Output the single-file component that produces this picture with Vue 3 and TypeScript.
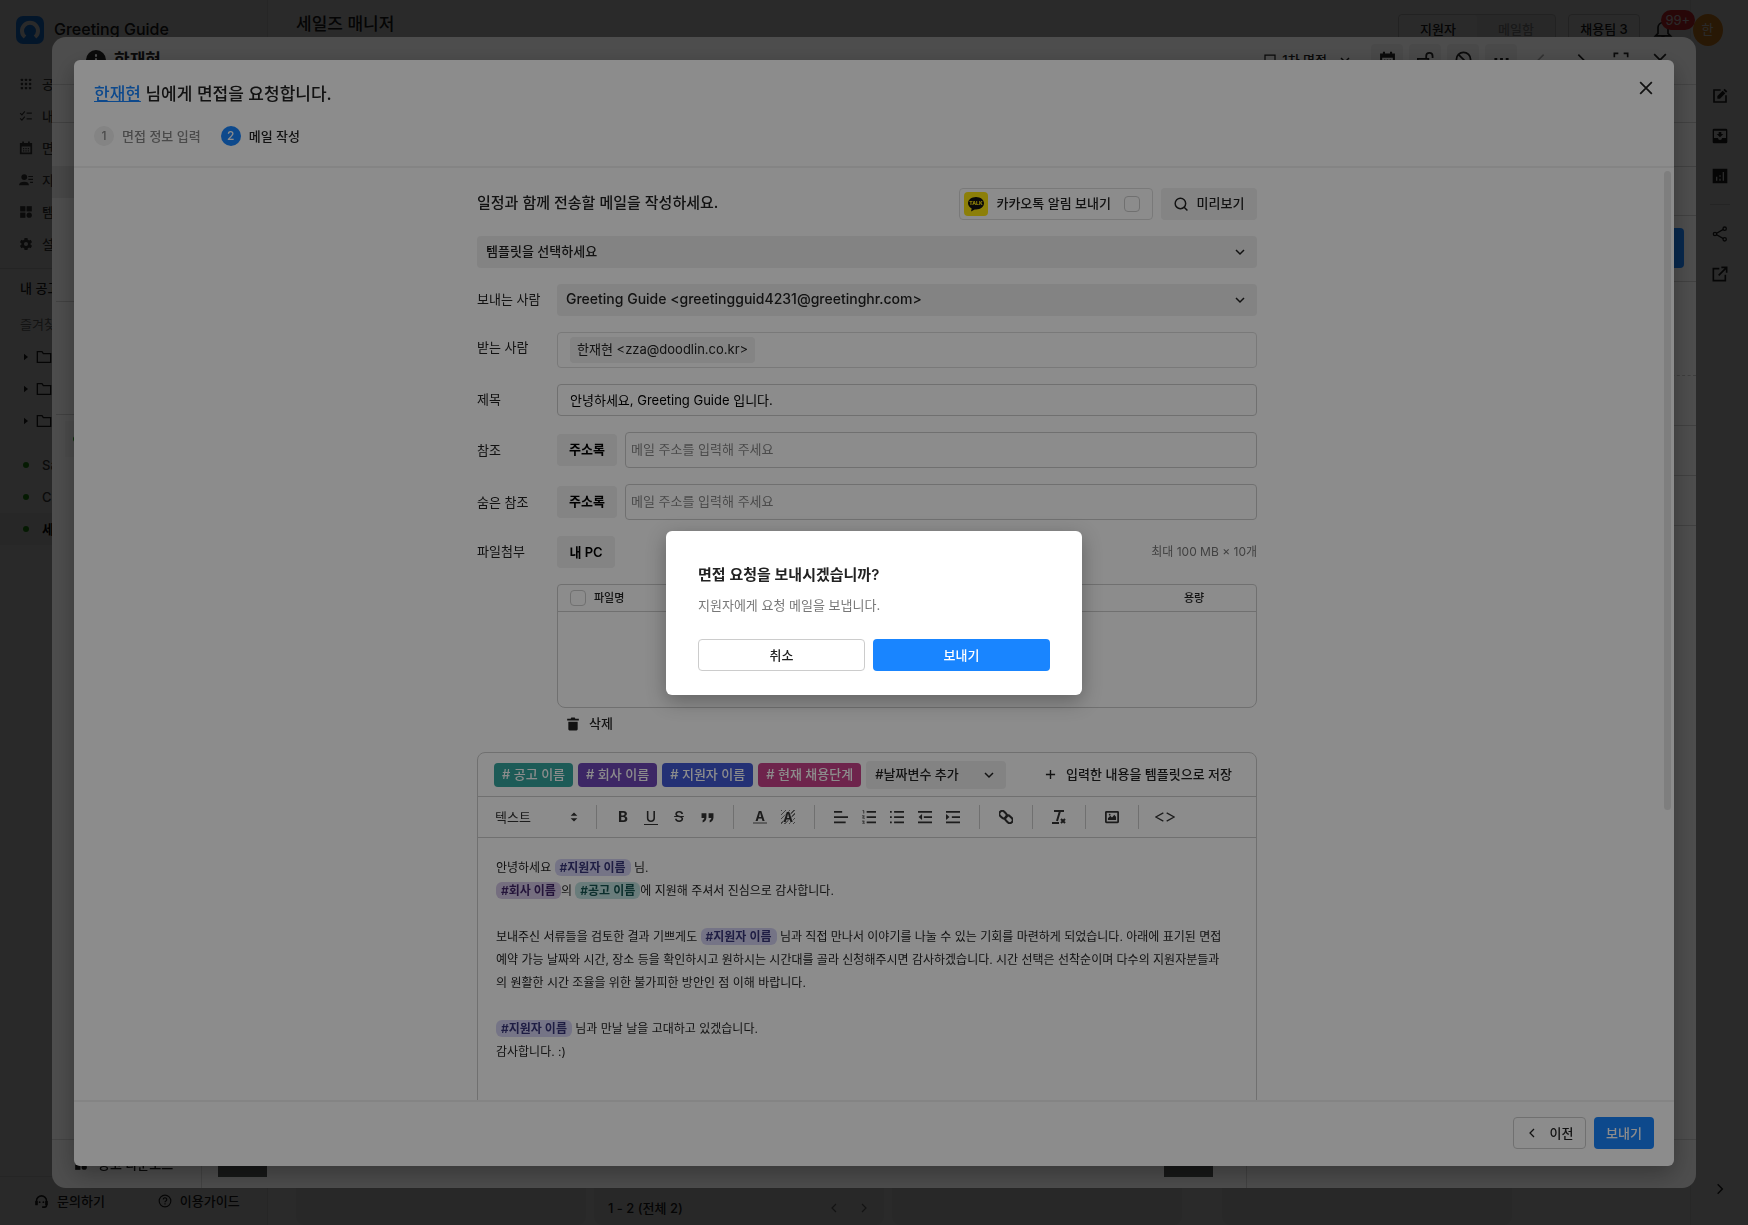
<script setup lang="ts">
import { h, ref } from 'vue'

const icons: Record<string, string> = {
  grid: '<g fill="currentColor"><rect x="3" y="3" width="4" height="4" rx="1"/><rect x="10" y="3" width="4" height="4" rx="1"/><rect x="17" y="3" width="4" height="4" rx="1"/><rect x="3" y="10" width="4" height="4" rx="1"/><rect x="10" y="10" width="4" height="4" rx="1"/><rect x="17" y="10" width="4" height="4" rx="1"/><rect x="3" y="17" width="4" height="4" rx="1"/><rect x="10" y="17" width="4" height="4" rx="1"/><rect x="17" y="17" width="4" height="4" rx="1"/></g>',
  checklist: '<path d="M2 7l3 3 5-6M2 16l3 3 5-6M13 7h9M13 17h9" fill="none" stroke="currentColor" stroke-width="2"/>',
  calendar: '<path d="M3 5h18v16H3zM3 8h18M7 1v4M17 1v4" fill="none" stroke="currentColor" stroke-width="3"/><path d="M7 13h2m2 0h2m2 0h2M7 17h2m2 0h2m2 0h2" stroke="currentColor" stroke-width="2"/>',
  person: '<circle cx="9" cy="7" r="5" fill="currentColor"/><path d="M0 21c0-4 4-6 9-6s8 2 8 6z" fill="currentColor"/><path d="M16 6h8M16 11h8M19 16h5" stroke="currentColor" stroke-width="2"/>',
  blocks: '<g fill="currentColor"><rect x="2" y="2" width="9" height="9"/><rect x="13" y="2" width="9" height="9"/><rect x="2" y="13" width="9" height="9"/><circle cx="17.500" cy="17.500" r="4.500"/></g>',
  gear: '<path fill="currentColor" fill-rule="evenodd" d="M19.900 13.200a8 8 0 0 0 0-2.400l2.500-2-2.300-4-3 1.200a8 8 0 0 0-2-1.200L14.600 1.600H9.400l-.5 3.200a8 8 0 0 0-2 1.200l-3-1.200-2.300 4 2.500 2a8 8 0 0 0 0 2.400l-2.500 2 2.300 4 3-1.200a8 8 0 0 0 2 1.200l.5 3.200h5.200l.5-3.200a8 8 0 0 0 2-1.200l3 1.200 2.300-4zM12 15.500a3.500 3.500 0 1 1 0-7 3.500 3.500 0 0 1 0 7z"/>',
  triangle: '<path d="M6 2l12 10-12 10z" fill="currentColor"/>',
  folder: '<path d="M2 20V4h7l2 3h11v13z" fill="none" stroke="currentColor" stroke-width="2"/>',
  headset: '<path d="M4 17V11a8 8 0 0 1 16 0v7a3 3 0 0 1-3 3h-4" fill="none" stroke="currentColor" stroke-width="2.500"/><path d="M2 11h4v7H2zM18 11h4v7h-4z" fill="currentColor"/><circle cx="9" cy="13" r="1.500" fill="currentColor"/><circle cx="15" cy="13" r="1.500" fill="currentColor"/>',
  help: '<circle cx="12" cy="12" r="10" fill="none" stroke="currentColor" stroke-width="2"/><path d="M9 9.500a3 3 0 1 1 4.500 2.600c-1 .6-1.500 1-1.500 2.100M12 16v2" fill="none" stroke="currentColor" stroke-width="2"/>',
  bell: '<path d="M12 3a6 6 0 0 0-6 6v7l-3 3h18l-3-3V9a6 6 0 0 0-6-6zM10 21h4" fill="none" stroke="currentColor" stroke-width="2"/>',
  edit: '<path d="M13 3H3v18h18V11" fill="none" stroke="currentColor" stroke-width="2.500"/><path d="M8 16v-4l8-8 4 4-8 8zM17 3l2-2 4 4-2 2z" fill="currentColor"/>',
  inbox: '<path fill="currentColor" fill-rule="evenodd" d="M3 1h18a2 2 0 0 1 2 2v18a2 2 0 0 1-2 2H3a2 2 0 0 1-2-2V3a2 2 0 0 1 2-2zm0 3v11h6a3 3 0 0 0 6 0h6V4zm7 2h4v3h3l-5 5-5-5h3z"/>',
  chart: '<path fill="currentColor" fill-rule="evenodd" d="M1 1h22v22H1zm5 12v6h2v-6zm5-2v2h2v-2zm0 5v3h2v-3zm5-10v13h2V6z"/>',
  share: '<path d="M5 12l14-8M5 12l14 8" stroke="currentColor" stroke-width="2"/><circle cx="4.500" cy="12" r="2.500" fill="#fff" stroke="currentColor" stroke-width="2"/><circle cx="19" cy="4" r="2.500" fill="#fff" stroke="currentColor" stroke-width="2"/><circle cx="19" cy="20" r="2.500" fill="#fff" stroke="currentColor" stroke-width="2"/>',
  external: '<path d="M11 4H2v18h18v-9M14 2h8v8M22 2L10 14" fill="none" stroke="currentColor" stroke-width="2.500"/>',
  chevronRight: '<path d="M8 4l8 8-8 8" fill="none" stroke="currentColor" stroke-width="2.500"/>',
  chevronLeft: '<path d="M16 4l-8 8 8 8" fill="none" stroke="currentColor" stroke-width="2.500"/>',
  chevronDown: '<path d="M4 8l8 8 8-8" fill="none" stroke="currentColor" stroke-width="3"/>',
  info: '<circle cx="12" cy="12" r="12" fill="currentColor"/><path d="M12 5v3M12 10v8" stroke="#fff" stroke-width="2.500"/>',
  stage: '<path d="M2 2h20v16h-7l-3 4-3-4H2z" fill="none" stroke="currentColor" stroke-width="2.500"/>',
  unlock: '<path d="M1 11h15v10H1zM13 11V7a4 4 0 0 1 9 0v3" fill="none" stroke="currentColor" stroke-width="2.500"/>',
  ban: '<circle cx="12" cy="12" r="10" fill="none" stroke="currentColor" stroke-width="2.500"/><path d="M5 5l14 14" stroke="currentColor" stroke-width="2.500"/>',
  more: '<path d="M2 12h4M10 12h4M18 12h4" stroke="currentColor" stroke-width="4"/>',
  expand: '<path d="M2 8V2h6M16 2h6v6M22 16v6h-6M8 22H2v-6" fill="none" stroke="currentColor" stroke-width="2.500"/>',
  close: '<path d="M2 2l20 20M22 2L2 22" stroke="currentColor" stroke-width="3"/>',
  search: '<circle cx="11" cy="11" r="9" fill="none" stroke="currentColor" stroke-width="2.500"/><path d="M17 17l6 6" stroke="currentColor" stroke-width="2.500"/>',
  trash: '<path d="M2 3h6l1-2h6l1 2h6v3H2zM4 8h16v13a2 2 0 0 1-2 2H6a2 2 0 0 1-2-2z" fill="currentColor"/>',
  plus: '<path d="M12 2v20M2 12h20" stroke="currentColor" stroke-width="3"/>',
  updown: '<path d="M12 1l8 8H4zM12 23l8-8H4z" fill="currentColor"/>',
  quote: '<path d="M1 4h9v8c0 5-3 8-7 9v-4c2-1 3-2 3-4H1zM14 4h9v8c0 5-3 8-7 9v-4c2-1 3-2 3-4h-5z" fill="currentColor"/>',
  align: '<path d="M0 3h14M0 12h24M0 21h20" stroke="currentColor" stroke-width="3"/>',
  ordered: '<path d="M8 3h16M8 12h16M8 21h16" stroke="currentColor" stroke-width="3"/><path d="M1 1h2v5M0 10h4l-3 4h4M0 19h4l-2 2 2 1-1 2H0" fill="none" stroke="currentColor" stroke-width="1.300"/>',
  bullets: '<path d="M7 3h17M7 12h17M7 21h17M0 3h3M0 12h3M0 21h3" stroke="currentColor" stroke-width="3"/>',
  outdent: '<path d="M0 3h24M10 12h14M0 21h24" stroke="currentColor" stroke-width="3"/><path d="M7 7v10l-6-5z" fill="currentColor"/>',
  indent: '<path d="M0 3h24M10 12h14M0 21h24" stroke="currentColor" stroke-width="3"/><path d="M0 7v10l6-5z" fill="currentColor"/>',
  link: '<g fill="none" stroke="currentColor" stroke-width="3.500"><rect x="0" y="3" width="14" height="10" rx="5" transform="rotate(45 7 8)"/><rect x="10" y="11" width="14" height="10" rx="5" transform="rotate(45 17 16)"/></g>',
  image: '<rect x="1.500" y="3" width="21" height="18" rx="1" fill="none" stroke="currentColor" stroke-width="3"/><path d="M5 17v-3l4-4 3 3 4-5 3 4v5z" fill="currentColor"/><circle cx="8" cy="8" r="1.500" fill="currentColor"/>',
  code: '<path d="M10 7L1 12l9 5M14 7l9 5-9 5" fill="none" stroke="currentColor" stroke-width="1.500"/>',
}

const Icon = (props: { name: string; size?: number }) =>
  h('svg', {
    viewBox: '0 0 24 24',
    width: props.size ?? 14,
    height: props.size ?? 14,
    'aria-hidden': 'true',
    innerHTML: icons[props.name],
  })
Icon.props = ['name', 'size']

const nav = [
  { icon: 'grid', label: '공고' },
  { icon: 'checklist', label: '내 할 일' },
  { icon: 'calendar', label: '면접' },
  { icon: 'person', label: '지원자' },
  { icon: 'blocks', label: '템플릿' },
  { icon: 'gear', label: '설정' },
]
const postings = ['Sales', 'CS', '세일즈 매니저']
const drawerTools = ['calendar', 'unlock', 'ban', 'more']
const variables = [
  { label: '# 공고 이름', tone: 'teal' },
  { label: '# 회사 이름', tone: 'purple' },
  { label: '# 지원자 이름', tone: 'blue' },
  { label: '# 현재 채용단계', tone: 'pink' },
]
const listTools = ['align', 'ordered', 'bullets', 'outdent', 'indent']
const copyRows = [
  { id: 'cc', label: '참조' },
  { id: 'bcc', label: '숨은 참조' },
]

const subject = ref('안녕하세요, Greeting Guide 입니다.')
const kakao = ref(false)
</script>

<template>
  <div class="page">
    <aside class="sidebar">
      <div class="brand">
        <svg width="28" height="28" viewBox="0 0 28 28" aria-hidden="true">
          <rect width="28" height="28" rx="7" fill="#1985ff" />
          <path d="M9 21a8 8 0 1 1 10 0" fill="none" stroke="#fff" stroke-width="4" />
        </svg>
        <strong>Greeting Guide</strong>
      </div>
      <nav>
        <a v-for="item in nav" :key="item.label" href="#" class="nav-item"><Icon :name="item.icon" /><span>{{ item.label }}</span></a>
      </nav>
      <div class="side-title">내 공고</div>
      <div class="side-sub">즐겨찾기</div>
      <div v-for="n in 3" :key="n" class="folder"><Icon name="triangle" size="8" /><Icon name="folder" size="16" /></div>
      <div class="postings">
        <a v-for="(name, i) in postings" :key="name" href="#" class="posting" :class="{ current: i === 2 }"><i></i><span>{{ name }}</span></a>
      </div>
      <footer class="side-foot">
        <a href="#"><Icon name="headset" size="15" />문의하기</a>
        <a href="#"><Icon name="help" size="14" />이용가이드</a>
      </footer>
    </aside>
    <main class="board">
      <header class="board-head">
        <h1>세일즈 매니저</h1>
        <div class="tabs"><button class="on">지원자</button><button>메일함</button></div>
        <button class="team">채용팀 3</button>
      </header>
      <div class="columns">
        <section></section>
        <section><span class="count">1 - 2 (전체 2)</span><Icon name="chevronLeft" size="12" /><Icon name="chevronRight" size="12" /></section>
        <section></section>
        <section class="apart"></section>
      </div>
    </main>
    <aside class="rail">
      <div class="account"><Icon name="bell" size="20" /><span class="avatar">한</span><span class="badge">99+</span></div>
      <div class="rail-icons">
        <Icon name="edit" size="16" /><Icon name="inbox" size="16" /><Icon name="chart" size="16" />
        <hr />
        <Icon name="share" size="16" /><Icon name="external" size="16" />
      </div>
      <Icon class="rail-toggle" name="chevronRight" size="14" />
    </aside>
  </div>

  <div class="overlay drawer-layer">
    <section class="drawer">
      <header class="drawer-head">
        <Icon name="info" size="20" /><h2>한재현</h2>
        <Icon name="stage" size="12" /><span class="stage-name">1차 면접</span><Icon name="chevronDown" size="12" />
        <div class="drawer-tools"><button v-for="t in drawerTools" :key="t" :aria-label="t"><Icon :name="t" size="17" /></button></div>
        <div class="drawer-nav"><Icon class="faint" name="chevronLeft" size="16" /><Icon name="chevronRight" size="16" /><Icon name="expand" size="16" /><Icon name="close" size="14" /></div>
      </header>
      <div class="drawer-body">
        <div class="strip left">
          <div class="s38 line"></div><div class="s43"></div><div class="s32 band"></div>
          <div class="s104 inset"></div><div class="s113 inset"></div><div class="s36 tinted"><i></i></div>
        </div>
        <div class="strip right">
          <div class="s38 line"></div><div class="s44 line"></div><div class="s49 line"></div>
          <div class="s66 line"><b></b></div><div class="s94 dashed"></div>
          <div class="s50 line"></div><div class="s50 line"></div><div class="s50 line"></div>
        </div>
      </div>
      <footer class="drawer-foot">
        <div class="download"><Icon name="blocks" size="14" />공고 다운로드</div>
        <div class="preview"><span></span><span></span></div>
        <div class="foot-end"></div>
      </footer>
    </section>
  </div>

  <div class="overlay modal-layer">
    <section class="modal" role="dialog" aria-label="면접 요청">
      <header class="modal-head">
        <div class="modal-title">
          <h2><a href="#">한재현</a> 님에게 면접을 요청합니다.</h2>
          <button class="plain" aria-label="닫기"><Icon name="close" size="14" /></button>
        </div>
        <ol class="steps">
          <li><span class="num">1</span>면접 정보 입력</li>
          <li class="active"><span class="num">2</span>메일 작성</li>
        </ol>
      </header>

      <div class="modal-body">
        <div class="scroll">
          <form class="form" @submit.prevent>
            <div class="intro">
              <h3>일정과 함께 전송할 메일을 작성하세요.</h3>
              <label class="kakao">
                <svg width="24" height="24" viewBox="0 0 24 24" aria-hidden="true">
                  <rect width="24" height="24" rx="4" fill="#ffe812" />
                  <path d="M12 5c-4.500 0-8 2.800-8 6.300 0 2.200 1.500 4.200 3.700 5.300L7 19.500l3.700-2.100c5 .6 9.300-2.300 9.300-6.100C20 7.800 16.500 5 12 5z" fill="#111" />
                  <text x="12" y="13" text-anchor="middle" font-size="5" font-weight="800" fill="#ffe812">TALK</text>
                </svg>
                <span class="text">카카오톡 알림 보내기</span>
                <input v-model="kakao" type="checkbox" />
              </label>
              <button class="soft preview-btn"><Icon name="search" /><span class="text">미리보기</span></button>
            </div>

            <div class="select">
              <select aria-label="템플릿"><option>템플릿을 선택하세요</option></select>
              <Icon name="chevronDown" size="12" />
            </div>

            <div class="row">
              <label for="sender">보내는 사람</label>
              <div class="select latin">
                <select id="sender"><option>Greeting Guide &lt;greetingguid4231@greetinghr.com&gt;</option></select>
                <Icon name="chevronDown" size="12" />
              </div>
            </div>
            <div class="row">
              <span class="label">받는 사람</span>
              <div class="recipients"><span class="chip">한재현 &lt;zza@doodlin.co.kr&gt;</span></div>
            </div>
            <div class="row">
              <label for="subject">제목</label>
              <input id="subject" v-model="subject" type="text" class="subject" />
            </div>
            <div v-for="r in copyRows" :key="r.id" class="row middle">
              <label :for="r.id">{{ r.label }}</label>
              <div class="copy">
                <button class="soft strong"><span class="text">주소록</span></button>
                <input :id="r.id" type="text" placeholder="메일 주소를 입력해 주세요" />
              </div>
            </div>
            <div class="row">
              <span class="label">파일첨부</span>
              <div class="attach">
                <div class="attach-top"><button class="soft strong pc">내 PC</button><span>최대 100 MB × 10개</span></div>
                <div class="files">
                  <table>
                    <thead>
                      <tr>
                        <th class="tick"><input type="checkbox" aria-label="전체 선택" /></th>
                        <th>파일명</th>
                        <th class="size">용량</th>
                      </tr>
                    </thead>
                  </table>
                </div>
                <button class="plain remove"><Icon name="trash" /><span class="text">삭제</span></button>
              </div>
            </div>

            <div class="editor">
              <div class="vars">
                <button v-for="v in variables" :key="v.label" class="var" :class="v.tone"><span class="text">{{ v.label }}</span></button>
                <div class="select date">
                  <select aria-label="날짜변수"><option>#날짜변수 추가</option></select>
                  <Icon name="chevronDown" size="12" />
                </div>
                <button class="plain save"><Icon name="plus" size="11" /><span class="text">입력한 내용을 템플릿으로 저장</span></button>
              </div>
              <div class="toolbar">
                <button class="format">텍스트<Icon name="updown" size="10" /></button>
                <div class="group">
                  <button aria-label="굵게"><b class="ltr">B</b></button>
                  <button aria-label="밑줄"><b class="ltr under">U</b></button>
                  <button aria-label="취소선"><b class="ltr strike">S</b></button>
                  <button aria-label="인용"><Icon name="quote" size="13" /></button>
                </div>
                <div class="group">
                  <button aria-label="글자색"><b class="ltr color">A</b></button>
                  <button aria-label="배경색"><b class="ltr hatch">A</b></button>
                </div>
                <div class="group"><button v-for="t in listTools" :key="t" :aria-label="t"><Icon :name="t" /></button></div>
                <div class="group"><button aria-label="링크"><Icon name="link" /></button></div>
                <div class="group">
                  <button aria-label="서식 지우기">
                    <svg width="16" height="16" viewBox="0 0 16 16" aria-hidden="true"><path d="M3 2h10M9 2L6 12M1 14h7M10 10l4 4M14 10l-4 4" fill="none" stroke="currentColor" stroke-width="2" /></svg>
                  </button>
                </div>
                <div class="group"><button aria-label="이미지"><Icon name="image" /></button></div>
                <div class="group"><button aria-label="코드"><Icon name="code" size="20" /></button></div>
              </div>
              <div class="content">
                <p>안녕하세요 <mark class="blue">#지원자 이름</mark> 님.</p>
                <p><mark class="purple">#회사 이름</mark>의 <mark class="teal">#공고 이름</mark>에 지원해 주셔서 진심으로 감사합니다.</p>
                <p><br /></p>
                <p>보내주신 서류들을 검토한 결과 기쁘게도 <mark class="blue">#지원자 이름</mark> 님과 직접 만나서 이야기를 나눌 수 있는 기회를 마련하게 되었습니다. 아래에 표기된 면접<br />예약 가능 날짜와 시간, 장소 등을 확인하시고 원하시는 시간대를 골라 신청해주시면 감사하겠습니다. 시간 선택은 선착순이며 다수의 지원자분들과<br />의 원활한 시간 조율을 위한 불가피한 방안인 점 이해 바랍니다.</p>
                <p><br /></p>
                <p><mark class="blue">#지원자 이름</mark> 님과 만날 날을 고대하고 있겠습니다.</p>
                <p>감사합니다. :)</p>
              </div>
            </div>
          </form>
        </div>
        <div class="track" aria-hidden="true"><div class="thumb"></div></div>
      </div>

      <footer class="modal-foot">
        <button class="outline back"><Icon name="chevronLeft" size="12" />이전</button>
        <button class="primary send">보내기</button>
      </footer>
    </section>
  </div>

  <div class="overlay confirm-layer">
    <section class="confirm" role="alertdialog" aria-labelledby="confirm-title">
      <h2 id="confirm-title">면접 요청을 보내시겠습니까?</h2>
      <p>지원자에게 요청 메일을 보냅니다.</p>
      <div class="actions"><button class="outline">취소</button><button class="primary">보내기</button></div>
    </section>
  </div>
</template>

<style>
body {
  overflow: hidden;
}
#app {
  font-family: Inter, 'Noto Sans CJK KR', sans-serif;
  font-size: 13px;
  line-height: 20px;
  color: #222;
}
</style>

<style scoped>
* {
  box-sizing: border-box;
}
h1,
h2,
h3,
p,
ol {
  margin: 0;
  padding: 0;
}
button,
input,
select {
  margin: 0;
  font: inherit;
  color: inherit;
}
button {
  display: inline-flex;
  align-items: center;
  justify-content: center;
  padding: 0;
  border: 0;
  border-radius: 4px;
  background: none;
  font-weight: 500;
  white-space: nowrap;
}
svg {
  display: block;
  flex: none;
}
a {
  color: inherit;
  text-decoration: none;
}
input[type='checkbox'] {
  appearance: none;
  width: 16px;
  height: 16px;
  border: 1px solid #ccc;
  border-radius: 4px;
  background: #fff;
}
.text {
  padding-bottom: 2px;
}

/* page behind the layers */
.page {
  display: grid;
  grid-template-columns: 268px 1fr 58px;
  height: 100vh;
  background: #fff;
}
.sidebar {
  display: flex;
  flex-direction: column;
  background: #fafafa;
  border-right: 1px solid #e8e8e8;
}
.brand {
  display: flex;
  align-items: center;
  gap: 10px;
  height: 60px;
  padding-left: 16px;
}
.brand strong {
  padding-bottom: 2px;
  font-size: 16px;
  font-weight: 500;
}
nav {
  padding: 8px 0;
  border-bottom: 1px solid #ddd;
}
.nav-item,
.posting {
  display: flex;
  align-items: center;
  gap: 9px;
  height: 32px;
  padding-left: 19px;
  color: #444;
  font-weight: 500;
}
.side-title {
  padding: 9px 20px;
  font-weight: 500;
}
.side-sub {
  padding: 7px 20px;
  color: #777;
}
.folder {
  display: flex;
  align-items: center;
  gap: 6px;
  height: 32px;
  padding-left: 22px;
}
.postings {
  padding-top: 12px;
}
.posting {
  gap: 13px;
  padding-left: 23px;
}
.posting i {
  width: 6px;
  height: 6px;
  border-radius: 50%;
  background: #1fa012;
}
.posting.current {
  background: #eee;
  color: #000;
  font-weight: 700;
}
.side-foot {
  display: flex;
  gap: 53px;
  height: 49px;
  margin-top: auto;
  padding-left: 34px;
  border-top: 1px solid #e0e0e0;
  font-weight: 500;
}
.side-foot a {
  display: flex;
  align-items: center;
  gap: 8px;
}
.board {
  display: flex;
  flex-direction: column;
  justify-content: space-between;
  padding: 14px 50px 0 28px;
}
.board-head {
  display: flex;
  gap: 12px;
}
.board-head h1 {
  flex: 1;
  font-size: 17px;
  font-weight: 500;
}
.tabs {
  display: flex;
  border: 1px solid #ccc;
  border-radius: 4px;
  background: #f2f2f2;
}
.tabs button {
  width: 78px;
  height: 30px;
  padding-bottom: 2px;
  color: #999;
}
.tabs .on {
  background: #fff;
  color: #222;
}
.team {
  width: 72px;
  height: 32px;
  padding-bottom: 2px;
  border: 1px solid #ccc;
}
.columns {
  display: flex;
  gap: 8px;
}
.columns section {
  display: flex;
  align-items: center;
  gap: 18px;
  width: 290px;
  height: 44px;
  padding: 10px 14px 0;
  border-radius: 8px;
  background: #f5f5f5;
  color: #777;
}
.columns .apart {
  margin-left: 32px;
}
.count {
  flex: 1;
  color: #222;
  font-weight: 500;
}
.rail {
  display: flex;
  flex-direction: column;
  border-left: 1px solid #eee;
  align-items: center;
  padding: 14px 0 29px;
}
.account {
  position: relative;
  display: flex;
  align-items: center;
  gap: 20px;
  width: 70px;
  margin-left: -64px;
}
.avatar {
  width: 32px;
  height: 32px;
  border-radius: 50%;
  background: #f59120;
  color: #fff;
  line-height: 30px;
  text-align: center;
}
.badge {
  position: absolute;
  left: 8px;
  top: -4px;
  padding: 0 5px;
  border-radius: 10px;
  background: #f02c36;
  color: #fff;
}
.rail-icons {
  display: flex;
  flex-direction: column;
  align-items: center;
  gap: 24px;
  padding-top: 42px;
}
.rail-icons hr {
  width: 20px;
  margin: -4px 0 -3px;
  border: 0;
  border-top: 1px solid #ddd;
}
.rail-toggle {
  margin-top: auto;
}

/* stacked layers */
.overlay {
  position: fixed;
  inset: 0;
  display: flex;
  background: rgba(0, 0, 0, 0.45);
}
.drawer-layer {
  padding: 37px 52px;
}
.modal-layer {
  padding: 60px 74px 59px;
}
.confirm-layer {
  align-items: center;
  justify-content: center;
}

.drawer {
  display: flex;
  flex: 1;
  flex-direction: column;
  border-radius: 14px;
  background: #fff;
  overflow: hidden;
}
.drawer-head {
  display: flex;
  align-items: center;
  height: 48px;
  padding: 0 29px 2px 34px;
  border-bottom: 1px solid #ddd;
}
.drawer-head h2 {
  flex: 1;
  padding-left: 8px;
  font-size: 17px;
  font-weight: 600;
}
.stage-name {
  padding: 0 12px 0 6px;
  font-weight: 500;
}
.drawer-tools {
  display: flex;
  gap: 6px;
  padding: 0 16px 0 20px;
}
.drawer-tools button {
  width: 32px;
  height: 32px;
  background: #f0f0f0;
}
.drawer-nav {
  display: flex;
  align-items: center;
  gap: 24px;
}
.faint {
  color: #aaa;
}
.drawer-body {
  display: flex;
  flex: 1;
  justify-content: space-between;
  min-height: 0;
}
.strip {
  width: 30px;
}
.s32 {
  height: 32px;
}
.s36 {
  height: 36px;
}
.s38 {
  height: 38px;
}
.s43 {
  height: 43px;
}
.s44 {
  height: 44px;
}
.s49 {
  height: 49px;
}
.s50 {
  height: 50px;
}
.s66 {
  height: 66px;
}
.s94 {
  height: 94px;
}
.s104 {
  height: 104px;
}
.s113 {
  height: 113px;
}
.line {
  border-bottom: 1px solid #d5d5d5;
}
.dashed {
  border-bottom: 1px dashed #ccc;
}
.band {
  background: #eaeaea;
}
.inset {
  margin-left: 4px;
  border-bottom: 1px solid #d5d5d5;
}
.tinted {
  display: flex;
  align-items: center;
  margin: 6px 0 0 13px;
  padding-left: 8px;
  background: #f6f6f6;
}
.tinted i {
  width: 6px;
  height: 6px;
  border-radius: 50%;
  background: #1fa012;
}
.right .s66 {
  padding: 12px 12px 12px 0;
}
.right b {
  display: block;
  height: 40px;
  border-radius: 4px;
  background: #1985ff;
}
.drawer-foot {
  display: flex;
  height: 49px;
  border-top: 1px solid #ddd;
}
.download {
  display: flex;
  align-items: center;
  gap: 10px;
  width: 150px;
  padding-left: 22px;
  border-right: 1px solid #ddd;
  font-weight: 500;
}
.preview {
  display: flex;
  flex: 1;
  justify-content: space-between;
  padding: 0 33px 11px 16px;
}
.preview span {
  width: 49px;
  background: #505552;
}
.foot-end {
  width: 450px;
  border-left: 1px solid #ddd;
}

/* mail modal */
.modal {
  display: flex;
  flex: 1;
  flex-direction: column;
  min-width: 0;
  border-radius: 6px;
  background: #fff;
  box-shadow: 0 8px 24px rgba(0, 0, 0, 0.3);
  overflow: hidden;
}
.modal-head {
  padding: 19px 20px 20px;
  border-bottom: 2px solid #f0f0f0;
}
.modal-title {
  display: flex;
  align-items: center;
  justify-content: space-between;
  height: 30px;
}
.modal-title h2 {
  font-size: 17px;
  font-weight: 500;
}
.modal-title h2 a {
  color: #1985ff;
  text-decoration: underline;
}
.plain {
  height: 32px;
}
.modal-title .plain {
  width: 16px;
  margin-top: -12px;
}
.steps {
  display: flex;
  gap: 20px;
  padding-top: 17px;
  list-style: none;
}
.steps li {
  display: flex;
  align-items: center;
  gap: 8px;
  color: #888;
  font-weight: 500;
}
.num {
  width: 20px;
  height: 20px;
  border-radius: 50%;
  background: #f0f0f0;
  font-size: 12px;
  text-align: center;
}
.steps .active {
  color: #222;
}
.active .num {
  background: #1985ff;
  color: #fff;
}
.modal-body {
  display: flex;
  flex: 1;
  min-height: 0;
}
.scroll {
  flex: 1;
  min-width: 0;
  padding-top: 20px;
  overflow-y: auto;
  scrollbar-width: none;
}
.track {
  width: 14px;
  padding: 3px 3px 3px 4px;
}
.thumb {
  height: 69%;
  border-radius: 4px;
  background: #e6e6e6;
}
.form {
  display: flex;
  flex-direction: column;
  gap: 16px;
  width: 780px;
  max-width: 100%;
  margin: 0 auto;
}
.intro {
  display: flex;
  align-items: center;
  gap: 8px;
}
.intro h3 {
  flex: 1;
  padding-bottom: 2px;
  font-size: 15px;
  font-weight: 500;
}
.kakao {
  display: flex;
  align-items: center;
  gap: 8px;
  height: 32px;
  padding: 0 12px 0 4px;
  border: 1px solid #ddd;
  border-radius: 4px;
  font-weight: 500;
}
.kakao input {
  margin-left: 5px;
}
.soft {
  height: 32px;
  background: #f0f0f0;
}
.preview-btn {
  gap: 9px;
  width: 96px;
}
.strong {
  width: 60px;
  color: #000;
  font-weight: 600;
}
.pc {
  width: 58px;
}
.select {
  position: relative;
  flex: 1;
}
.select select {
  display: block;
  appearance: none;
  width: 100%;
  height: 32px;
  padding: 0 32px 2px 9px;
  border: 0;
  border-radius: 4px;
  background: #efefef;
  font-weight: 500;
}
.latin select {
  font-size: 14px;
}
.select svg {
  position: absolute;
  right: 11px;
  top: 50%;
  margin-top: -6px;
}
.row {
  display: flex;
  align-items: flex-start;
}
.middle {
  align-items: center;
}
.row > label,
.label {
  width: 80px;
  line-height: 30px;
}
.recipients {
  display: flex;
  flex: 1;
  align-items: center;
  height: 36px;
  padding-left: 12px;
  border: 1px solid #ddd;
  border-radius: 4px;
}
.chip {
  padding: 2px 7px 4px;
  border-radius: 4px;
  background: #f0f0f0;
}
input[type='text'] {
  flex: 1;
  min-width: 0;
  height: 36px;
  padding: 0 5px 2px;
  border: 1px solid #ccc;
  border-radius: 4px;
  background: #fff;
  color: #000;
}
input.subject {
  height: 32px;
  padding: 0 12px 2px;
}
input::placeholder {
  color: #888;
}
.copy {
  display: flex;
  flex: 1;
  align-items: center;
  gap: 8px;
}
.attach {
  flex: 1;
}
.attach-top {
  display: flex;
  align-items: center;
  justify-content: space-between;
  padding-bottom: 16px;
  color: #777;
  font-size: 12px;
}
.attach-top button {
  font-size: 13px;
}
.files {
  height: 124px;
  border: 1px solid #ccc;
  border-radius: 4px 4px 8px 8px;
}
table {
  width: 100%;
  border-collapse: collapse;
}
th {
  height: 26px;
  padding: 0;
  border-bottom: 1px solid #ccc;
  font-size: 11px;
  font-weight: 500;
  text-align: left;
}
th.tick {
  width: 36px;
  padding-left: 12px;
}
th input {
  display: block;
}
th.size {
  width: 72px;
}
.remove {
  gap: 9px;
  padding: 0 9px;
}
.editor {
  margin-top: -4px;
  border: 1px solid #ccc;
  border-radius: 8px 8px 0 0;
}
.vars {
  display: flex;
  align-items: center;
  gap: 5px;
  height: 44px;
  padding: 0 24px 0 16px;
  border-bottom: 1px solid #ccc;
}
.var {
  height: 24px;
  padding: 0 8px;
  color: #fff;
}
.var.teal {
  background: #35a69f;
}
.var.purple {
  background: #7048b8;
}
.var.blue {
  background: #4359d6;
}
.var.pink {
  background: #c9438a;
}
.date {
  flex: none;
  width: 140px;
}
.date select {
  height: 28px;
}
.save {
  gap: 10px;
  margin-left: auto;
}
.toolbar {
  display: flex;
  align-items: center;
  height: 41px;
  border-bottom: 1px solid #ccc;
  color: #333;
}
.format {
  justify-content: space-between;
  width: 118px;
  padding: 0 17px;
  font-weight: 400;
}
.group {
  display: flex;
  align-items: center;
  height: 24px;
  padding: 0 12px;
  border-left: 1px solid #ccc;
}
.group button {
  width: 28px;
  height: 24px;
}
.ltr {
  width: 14px;
  font-size: 15px;
  line-height: 14px;
  text-align: center;
}
.under {
  border-bottom: 1px solid #333;
  font-size: 14px;
  font-weight: 500;
}
.strike {
  font-weight: 500;
  text-decoration: line-through;
}
.color {
  border-bottom: 2px solid #aaa;
  font-size: 13px;
  line-height: 12px;
}
.hatch {
  background: repeating-linear-gradient(135deg, #777 0 1px, transparent 1px 3px);
  font-size: 13px;
  text-shadow: 0 0 2px #fff, 0 0 2px #fff, 0 0 2px #fff;
}
.content {
  min-height: 300px;
  padding: 18px 0 18px 18px;
  font-size: 12px;
  line-height: 23px;
  white-space: nowrap;
}
mark {
  padding: 1px 5px;
  border-radius: 6px;
  font-weight: 600;
}
mark.blue {
  background: #d6d4f5;
  color: #38367a;
}
mark.purple {
  background: #d5c8e8;
  color: #43266a;
}
mark.teal {
  background: #bfe2e0;
  color: #155450;
}
.modal-foot {
  display: flex;
  justify-content: flex-end;
  gap: 8px;
  padding: 15px 20px 17px;
  border-top: 2px solid #f0f0f0;
}
.outline {
  height: 32px;
  border: 1px solid #ccc;
  background: #fff;
}
.primary {
  height: 32px;
  background: #1985ff;
  color: #fff;
}
.back {
  gap: 12px;
  width: 73px;
}
.send {
  width: 60px;
}

/* confirmation */
.confirm {
  width: 416px;
  padding: 32px 32px 24px;
  border-radius: 6px;
  background: #fff;
  box-shadow: 0 6px 20px rgba(0, 0, 0, 0.3);
}
.confirm h2 {
  font-size: 15px;
  font-weight: 600;
  line-height: 24px;
}
.confirm p {
  padding: 8px 0 24px;
  color: #777;
}
.actions {
  display: flex;
  gap: 8px;
}
.actions button {
  flex: 1 1 auto;
}
</style>
